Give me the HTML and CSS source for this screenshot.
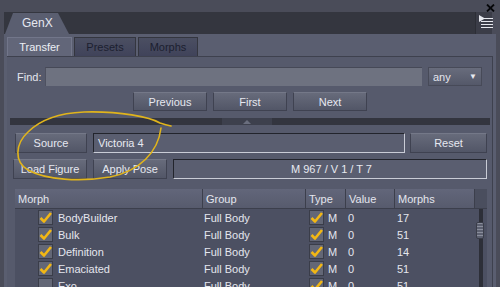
FILE: index.html
```html
<!DOCTYPE html>
<html lang="en">
<head>
    <meta charset="UTF-8">
    <title>GenX</title>
    <link rel="stylesheet" href="styles.css">
</head>
<body>
<div class="app">

    <!-- Title bar -->
    <div class="titlebar">
        <svg class="close" width="9" height="8" viewBox="0 0 9 8">
            <path d="M1,0.5 L8,7.5 M8,0.5 L1,7.5" stroke="#06070a" stroke-width="1.8"/>
        </svg>
    </div>

    <!-- Window tab strip -->
    <div class="tabbar">
        <div class="tab-genx">GenX</div>
        <div class="tab-fill"></div>
        <div class="menu-btn">
            <svg width="15" height="18" viewBox="0 0 15 18">
                <polygon points="1,1 7,4.5 1,8" fill="#e6e8ee"/>
                <rect x="3" y="4" width="12" height="1" fill="#e6e8ee"/>
                <rect x="3" y="7" width="12" height="1" fill="#e6e8ee"/>
                <rect x="3" y="10" width="12" height="1" fill="#e6e8ee"/>
                <rect x="3" y="13" width="12" height="1" fill="#e6e8ee"/>
            </svg>
        </div>
    </div>

    <div class="panel">
        <div class="subtabs">
            <div class="subtab active">Transfer</div>
            <div class="subtab">Presets</div>
            <div class="subtab">Morphs</div>
        </div>

        <div class="content">
            <div class="find-row">
                <label class="find-label">Find:</label>
                <div class="find-input"></div>
                <div class="dropdown">any <span class="arrow">&#x25BC;</span></div>
            </div>

            <div class="nav-row">
                <button class="btn nav-btn">Previous</button>
                <button class="btn nav-btn">First</button>
                <button class="btn nav-btn">Next</button>
            </div>

            <div class="splitter"><div class="grip"><span></span></div></div>

            <div class="source-row">
                <button class="btn source-btn">Source</button>
                <div class="field source-field">Victoria 4</div>
                <button class="btn reset-btn">Reset</button>
            </div>

            <div class="load-row">
                <button class="btn load-btn">Load Figure</button>
                <button class="btn load-btn">Apply Pose</button>
                <div class="field status-field">M 967 / V 1 / T 7</div>
            </div>

            <div class="table">
                <div class="table-main">
                    <div class="row head">
                        <div class="th">Morph</div>
                        <div class="th">Group</div>
                        <div class="th">Type</div>
                        <div class="th">Value</div>
                        <div class="th">Morphs</div>
                    </div>
                    <div id="rows"></div>
                </div>
                <div class="scroll">
                    <div class="scroll-head"></div>
                    <div class="scroll-track"><div class="thumb"></div></div>
                </div>
            </div>
        </div>
    </div>

    <!-- hand drawn annotation round the Source button -->
    <svg class="annotation" width="500" height="287" viewBox="0 0 500 287">
        <path d="M171,126 C166,125 163,124 160,123 C150,117 120,111 84,112 C60,113 40,120 28,132 C15,144 14,162 28,170 C46,180 80,182 110,177 C140,171 158,152 161,128"
              fill="none" stroke="#e0b41c" stroke-width="1.6" stroke-linecap="round"/>
    </svg>
</div>

<script>
    // Morph list
    const morphs = [
        { name: 'BodyBuilder', group: 'Full Body', checked: true, value: 0, count: 17 },
        { name: 'Bulk', group: 'Full Body', checked: true, value: 0, count: 51 },
        { name: 'Definition', group: 'Full Body', checked: true, value: 0, count: 14 },
        { name: 'Emaciated', group: 'Full Body', checked: true, value: 0, count: 51 },
        { name: 'Exo', group: 'Full Body', checked: false, value: 0, count: 51 },
    ];

    const check = '<svg width="13" height="13" viewBox="0 0 13 13"><path d="M1.5,7 L5,10.5 L12,2" fill="none" stroke="#f2b714" stroke-width="2.6" stroke-linejoin="round"/></svg>';

    function loadRows() {
        const rows = document.getElementById('rows');
        morphs.forEach(m => {
            const row = document.createElement('div');
            row.classList.add('row');
            row.innerHTML = `
                <div class="td morph"><span class="box">${m.checked ? check : ''}</span>${m.name}</div>
                <div class="td group">${m.group}</div>
                <div class="td type"><span class="box">${check}</span>M</div>
                <div class="td value">${m.value}</div>
                <div class="td count">${m.count}</div>
            `;
            rows.appendChild(row);
        });
    }

    loadRows();
</script>
</body>
</html>
```

FILE: styles.css
```css
/* Reset */
* {
    margin: 0;
    padding: 0;
    box-sizing: border-box;
}

body {
    width: 500px;
    height: 287px;
    overflow: hidden;
    background-color: #4a4c59;
    color: #e4e6ee;
    font-family: "Liberation Sans", Arial, sans-serif;
    font-size: 11px;
}

.app {
    position: relative;
    height: 287px;
}

/* Title bar */
.titlebar {
    height: 12px;
    display: flex;
    justify-content: flex-end;
    align-items: flex-end;
    padding-right: 5px;
}

.close {
    display: block;
    margin-bottom: 0;
}

/* Tab strip */
.tabbar {
    height: 22px;
    margin-left: 4px;
    margin-right: 8px;
    display: flex;
    background-color: #34363f;
}

.tab-genx {
    width: 64px;
    margin-left: 1px;
    height: 22px;
    background-color: #5a5e70;
    clip-path: polygon(8px 1px, 53px 1px, 64px 22px, 0 22px);
    font-size: 12px;
    color: #e6e8f0;
    padding: 4px 0 0 17px;
}

.tab-fill {
    flex: 1;
}

.menu-btn {
    width: 17px;
    background-color: #3b3d48;
    border-left: 1px solid #2c2e36;
    padding: 2px 0 0 2px;
}

/* Main panel */
.panel {
    margin-left: 4px;
    margin-right: 4px;
    height: 253px;
    background-color: #5a5e70;
    padding: 3px 3px 0 3px;
}

.subtabs {
    display: flex;
    gap: 2px;
    height: 19px;
}

.subtab {
    width: 62px;
    background: linear-gradient(#4b4f62, #40435a);
    border: 1px solid #34363f;
    border-bottom: none;
    color: #1c1f30;
    text-align: center;
    padding-top: 3px;
}

.subtab.active {
    width: 65px;
    background: #626679;
    border-color: #72768a;
    color: #eceef4;
}

.subtab:nth-child(3) {
    width: 60px;
}

/* Content box */
.content {
    width: 486px;
    height: 231px;
    background-color: #565a6c;
    border-top: 1px solid #3e414e;
    border-right: 1px solid #3e414e;
    padding-top: 10px;
}

.find-row {
    display: flex;
    align-items: center;
    height: 19px;
    padding-left: 10px;
}

.find-label {
    width: 28px;
}

.find-input {
    width: 377px;
    height: 19px;
    background-color: #6e7280;
    border-top: 1px solid #464957;
    border-left: 1px solid #4e5160;
}

.dropdown {
    width: 54px;
    height: 19px;
    margin-left: 6px;
    background: linear-gradient(#686c7c, #545869);
    border: 1px solid #474a58;
    display: flex;
    justify-content: space-between;
    align-items: center;
    padding: 0 4px 0 4px;
}

.arrow {
    font-size: 8px;
    color: #e8eaf0;
}

/* Buttons */
.btn {
    height: 19px;
    background: linear-gradient(#676b7b, #525667);
    border: 1px solid #3f4251;
    border-top-color: #747888;
    color: #e6e8f0;
    font-family: "Liberation Sans", Arial, sans-serif;
    font-size: 11px;
}

.nav-row {
    display: flex;
    gap: 6px;
    margin-top: 6px;
    padding-left: 126px;
}

.nav-btn {
    width: 74px;
}

.splitter {
    width: 480px;
    height: 7px;
    margin: 7px 0 0 3px;
    background-color: #33353f;
    display: flex;
    justify-content: center;
}

.grip {
    width: 50px;
    margin-left: -6px;
    background-color: #3d404d;
    display: flex;
    justify-content: center;
    align-items: center;
}

.grip span {
    width: 0;
    height: 0;
    border-left: 4px solid transparent;
    border-right: 4px solid transparent;
    border-bottom: 4px solid #6a6e7e;
}

.source-row {
    display: flex;
    margin: 8px 0 0 8px;
    height: 20px;
}

.source-btn {
    width: 72px;
    height: 20px;
}

.field {
    background-color: #5a5e70;
    border-top: 1px solid #22242c;
    border-left: 1px solid #22242c;
    border-bottom: 1px solid #c9ccd6;
    border-right: 1px solid #c9ccd6;
    color: #e8eaf0;
}

.source-field {
    width: 312px;
    margin-left: 6px;
    padding: 3px 0 0 4px;
}

.reset-btn {
    width: 77px;
    height: 20px;
    margin-left: 5px;
}

.load-row {
    display: flex;
    gap: 6px;
    margin: 6px 0 0 6px;
    height: 20px;
}

.load-btn {
    width: 74px;
    height: 20px;
}

.status-field {
    width: 314px;
    padding: 3px 0 0 117px;
}

/* Morph table */
.table {
    display: flex;
    margin: 10px 0 0 8px;
    width: 472px;
}

.table-main {
    width: 460px;
    background-color: #4c5062;
}

.row {
    display: grid;
    grid-template-columns: 188px 103px 40px 49px 80px;
    height: 17px;
    align-items: center;
}

.row.head {
    height: 20px;
    background-color: #565a6c;
}

.th {
    height: 20px;
    background: linear-gradient(#62667a, #575b6d);
    border-right: 1px solid #3c3f4c;
    border-bottom: 1px solid #3c3f4c;
    padding: 4px 0 0 3px;
}

.td {
    display: flex;
    align-items: center;
    white-space: nowrap;
}

.box {
    width: 15px;
    height: 15px;
    background-color: #636776;
    border: 1px solid #3a3d49;
    display: flex;
    align-items: center;
    justify-content: center;
}

.morph {
    padding-left: 23px;
}

.morph .box {
    margin-right: 5px;
}

.group {
    padding-left: 1px;
}

.type {
    padding-left: 3px;
}

.type .box {
    margin-right: 4px;
}

.value,
.count {
    padding-left: 2px;
}

.scroll {
    width: 12px;
    display: flex;
    flex-direction: column;
}

.scroll-head {
    height: 20px;
    background-color: #4a4e5e;
    border-bottom: 1px solid #3c3f4c;
}

.scroll-track {
    flex: 1;
    background: linear-gradient(90deg, #4c5062 4px, #2d2f38 4px, #2d2f38 8px, #4c5062 8px);
    padding-top: 13px;
}

.thumb {
    width: 8px;
    height: 17px;
    margin-left: 1px;
    background: repeating-linear-gradient(#8a8e9c 0, #8a8e9c 1px, #5c6070 1px, #5c6070 3px);
    border: 1px solid #3a3d49;
    border-radius: 2px;
}

/* Annotation overlay */
.annotation {
    position: absolute;
    top: 0;
    left: 0;
    pointer-events: none;
}
```
